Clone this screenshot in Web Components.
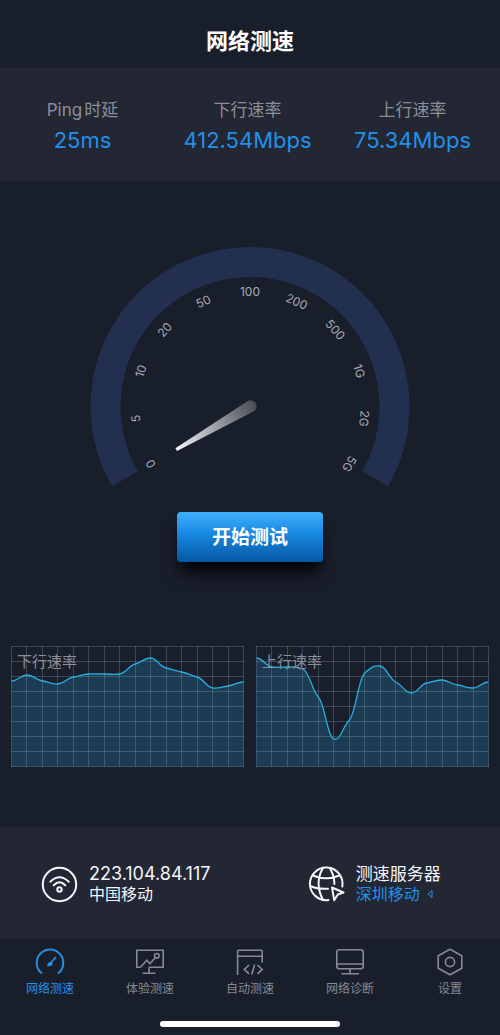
<!DOCTYPE html>
<html lang="zh-CN">
<head>
<meta charset="utf-8">
<meta name="viewport" content="width=device-width, initial-scale=1">
<title>网络测速</title>
<style>
  html { background: #191e2b; }
  body { margin: 0; font-family: Inter, "Noto Sans CJK SC", sans-serif; color: #f4f6fc; }
</style>
</head>
<body>
<speed-app></speed-app>

<script>
const define = (name, html, setup) => {
  const template = document.createElement('template');
  template.innerHTML = html;
  customElements.define(name, class extends HTMLElement {
    connectedCallback() {
      if (this.shadowRoot) return;
      const root = this.attachShadow({ mode: 'open' });
      root.append(template.content.cloneNode(true));
      if (setup) setup(this, root);
    }
  });
};

define('app-header', `
<style>
  :host { display: block; padding: 25px 16px 11px; text-align: center; }
  h1 { margin: 0; font-size: 22px; line-height: 32px; font-weight: 700; color: #fff; }
</style>
<h1><slot></slot></h1>`);

define('stat-item', `
<style>
  :host { display: flex; flex-direction: column; align-items: center; text-autospace: normal; }
  .label { font-size: 17px; line-height: 28px; color: #8c8e99; }
  .value { font-size: 22px; line-height: 32px; color: #2290ea; }
</style>
<span class="label"><slot name="label"></slot></span>
<span class="value"><slot></slot></span>`);

define('stat-bar', `
<style>
  :host { display: grid; grid-template-columns: repeat(3, 33%); padding: 28px 0 25px; background: #222733; }
</style>
<slot></slot>`);

define('speed-gauge', `
<style>
  :host { display: block; width: 64%; margin: 0 auto; }
  svg { display: block; width: 100%; height: auto; }
  text { font-size: 12px; fill: #a8aab4; text-anchor: middle; }
</style>
<svg viewBox="0 0 320 242" role="img" aria-label="测速仪表">
  <defs>
    <linearGradient id="needle" gradientUnits="userSpaceOnUse" x1="86" y1="203" x2="166" y2="157">
      <stop offset="0" stop-color="#f4f4f7"/><stop offset="1" stop-color="#484a55"/>
    </linearGradient>
  </defs>
  <path d="M34.9 231.8A144.5 144.5 0 1 1 285.1 231.8" fill="none" stroke="#232f4e" stroke-width="30"/>
  <g id="ticks"></g>
  <path d="M85.4 201.2L157 154.5A6 6 0 1 1 163 164.800L87 204Z" fill="url(#needle)"/>
</svg>`, (host, root) => {
  const ticks = root.querySelector('#ticks');
  const labels = host.getAttribute('labels').split(' ');
  labels.forEach((label, i) => {
    const t = document.createElementNS('http://www.w3.org/2000/svg', 'text');
    const angle = -120 + 240 * i / (labels.length - 1);
    t.setAttribute('transform', `rotate(${angle} 160 159.500)`);
    t.setAttribute('x', 160);
    t.setAttribute('y', 49);
    t.textContent = label;
    ticks.append(t);
  });
});

define('start-button', `
<style>
  :host { display: flex; justify-content: center; }
  button { border: 0; border-radius: 4px; padding: 11px 35px 9px; font: 600 19px/30px Inter, "Noto Sans CJK SC", sans-serif; color: #fff;
    background: linear-gradient(#40b0fc, #188ae4 42%, #0457a2); box-shadow: 0 14px 16px -4px #020307; cursor: pointer; }
</style>
<button type="button"><slot></slot></button>`);

define('rate-chart', `
<style>
  :host { display: grid; }
  svg, .label { grid-area: 1 / 1; }
  svg { display: block; width: 100%; height: auto; }
  .label { padding: 4px 6px; font-size: 15px; line-height: 24px; color: #8c8e99; }
  .grid { fill: none; stroke: #8fa6b8; stroke-opacity: .3; }
  .area { fill: #1b3c52; }
  .line { fill: none; stroke: #29aee0; stroke-width: 1.3; }
</style>
<svg viewBox="0 0 233 121" aria-hidden="true">
  <path class="area"/><path class="grid"/><path class="line"/>
</svg>
<span class="label"><slot></slot></span>`, (host, root) => {
  const step = 232 / 15;
  const ys = host.getAttribute('values').split(' ').map(Number);
  const slope = i => i === 0 || i === ys.length - 1 ? 0 : (ys[i + 1] - ys[i - 1]) * 0.1;
  let line = `M.5 ${ys[0]}`;
  for (let i = 1; i < ys.length; i++) {
    const x0 = (i - 1) * step + .5, x1 = i * step + .5;
    line += `C${x0 + step * .42} ${ys[i - 1] + slope(i - 1)} ${x1 - step * .42} ${ys[i] - slope(i)} ${x1} ${ys[i]}`;
  }
  let grid = '';
  for (let i = 0; i <= 15; i++) grid += `M${Math.round(i * step) + .5} 0V121`;
  for (let i = 0; i <= 8; i++) grid += `M0 ${i * 15 + .5}H233`;
  root.querySelector('.line').setAttribute('d', line);
  root.querySelector('.area').setAttribute('d', line + 'V120.5H.5Z');
  root.querySelector('.grid').setAttribute('d', grid);
});

define('info-item', `
<style>
  :host { display: flex; align-items: center; gap: 11px; }
  div { display: flex; flex-direction: column; }
  .main { font-size: var(--main-size, 17px); line-height: 20px; }
  .sub { font-size: 16px; line-height: 20px; }
</style>
<slot name="icon"></slot>
<div><span class="main"><slot></slot></span><span class="sub"><slot name="sub"></slot></span></div>`);

define('info-bar', `
<style>
  :host { display: grid; grid-template-columns: 8fr 7fr; padding: 37px 0 35px; background: #222733; }
  info-item { padding-left: 41px; }
  .address { --main-size: 18px; }
  svg { display: block; width: 37px; height: 37px; fill: none; stroke: #f4f6fc; stroke-width: 2; }
  a { display: flex; align-items: center; gap: 7px; color: #2290ea; text-decoration: none; }
  a svg { width: 6px; height: 10px; stroke: #2290ea; stroke-width: 1; }
</style>
<info-item class="address">
  <svg slot="icon" viewBox="0 0 37 37" aria-hidden="true">
    <circle cx="18.500" cy="18.500" r="16.700"/>
    <path d="M9.300 15.800Q18.500 6.800 27.700 15.800M12.700 19.200Q18.500 13.400 24.300 19.200" stroke-linecap="round"/>
    <circle cx="18.500" cy="23.500" r="2.200"/>
  </svg>
  223.104.84.117
  <span slot="sub">中国移动</span>
</info-item>
<info-item>
  <svg slot="icon" viewBox="0 0 37 37" aria-hidden="true" stroke-linecap="round">
    <path d="M34.300 20.500A16.300 16.300 0 1 0 20.500 34"/>
    <path d="M14.700 2.500Q6.500 17 14.700 33.500M22 2.500Q26.300 9.500 26.400 18"/>
    <path d="M4.800 9.500Q18 15.200 31.500 9.500M2.200 20Q9 23.300 20 22.800"/>
    <path d="M24 21.500L35.500 26.500L29.800 28.500L26.200 34.200Z" stroke-linejoin="round"/>
  </svg>
  测速服务器
  <a slot="sub" href="#server">深圳移动<svg viewBox="0 0 6 10" aria-hidden="true"><path d="M5 1.500V8.500L1 5Z"/></svg></a>
</info-item>`);

define('tab-item', `
<style>
  :host { display: block; color: #878993; }
  :host([active]) { color: #258fe6; }
  a { display: flex; flex-direction: column; align-items: center; gap: 4px; color: inherit; text-decoration: none; font-size: 12px; line-height: 18px; }
</style>
<a><slot name="icon"></slot><span><slot></slot></span></a>`, (host, root) => {
  const a = root.querySelector('a');
  a.href = host.getAttribute('href');
  if (host.hasAttribute('active')) a.setAttribute('aria-current', 'page');
});

define('tab-bar', `
<style>
  :host { display: block; padding: 9px 0 8px; }
  nav { display: grid; grid-template-columns: repeat(5, 1fr); }
  svg { display: block; width: 30px; height: 28px; fill: none; stroke: currentColor; stroke-width: 1.600; }
  .home { width: 36%; height: 6px; margin: 23px auto 0; border-radius: 3px; background: #fff; }
</style>
<nav aria-label="主导航">
  <tab-item href="#speed" active>
    <svg slot="icon" viewBox="0 0 30 28" aria-hidden="true"><path d="M7 25.500A13.300 13.300 0 1 1 23 25.500" stroke-width="2"/><path d="M15 15.500L21 9.200" stroke-width="1.800"/><path d="M12.300 18.800C11.500 15.500 14.500 13 17.300 14.200L17.500 17.200Z" fill="currentColor" stroke="none"/></svg>
    网络测速</tab-item>
  <tab-item href="#experience">
    <svg slot="icon" viewBox="0 0 30 28" aria-hidden="true"><path d="M5.500 19.300H1.800V2.200H28.200V19.300H14M14 19.300V25.200M7.500 25.200H20.500M5.500 19.300L11.800 12.200L14.800 15.800L20.200 9.800"/><circle cx="21.800" cy="7.800" r="2.300"/></svg>
    体验测速</tab-item>
  <tab-item href="#auto">
    <svg slot="icon" viewBox="0 0 30 28" aria-hidden="true"><path d="M2.600 27V3.200Q2.600 2.200 3.600 2.200H26.200Q27.200 2.200 27.200 3.200V14.500M2.600 8.300H27.200M14 17L9.300 21.400L14 25.800M22.500 17L27.200 21.400L22.500 25.800M19.700 16.500L16.700 26.500"/></svg>
    自动测速</tab-item>
  <tab-item href="#diagnosis">
    <svg slot="icon" viewBox="0 0 30 28" aria-hidden="true"><rect x="1.800" y="1.800" width="26.400" height="19" rx="2.500"/><path d="M2 16H28M15 20.800V25.800M6.500 25.800H24"/></svg>
    网络诊断</tab-item>
  <tab-item href="#settings">
    <svg slot="icon" viewBox="0 0 30 28" aria-hidden="true"><path d="M15 1.200L26.800 7.700V20.300L15 26.800L3.200 20.300V7.700Z"/><circle cx="15" cy="14" r="4.600"/></svg>
    设置</tab-item>
</nav>
<div class="home"></div>`);

define('speed-app', `
<style>
  :host { display: block; }
  main { display: block; }
  speed-gauge { margin-top: 66px; }
  start-button { margin-top: 23px; }
  .charts { display: grid; grid-template-columns: 1fr 1fr; gap: 12px; padding: 84px 11px 60px; }
</style>
<app-header>网络测速</app-header>
<main>
  <stat-bar>
    <stat-item><span slot="label">Ping时延</span>25ms</stat-item>
    <stat-item><span slot="label">下行速率</span>412.54Mbps</stat-item>
    <stat-item><span slot="label">上行速率</span>75.34Mbps</stat-item>
  </stat-bar>
  <speed-gauge labels="0 5 10 20 50 100 200 500 1G 2G 5G"></speed-gauge>
  <start-button>开始测试</start-button>
  <div class="charts">
    <rate-chart values="35 29 35 38 31 28 28 28 18 12 22 26 31 42 40 36">下行速率</rate-chart>
    <rate-chart values="12 21 21 23 51 93 74 27 20 36 47 37 34 39 42 36">上行速率</rate-chart>
  </div>
  <info-bar></info-bar>
</main>
<tab-bar></tab-bar>`);
</script>
</body>
</html>
